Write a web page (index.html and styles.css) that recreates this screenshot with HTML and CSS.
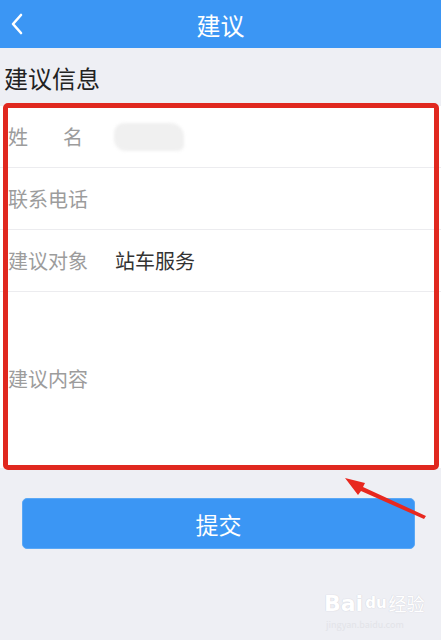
FILE: index.html
```html
<!DOCTYPE html>
<html>
<head>
    <title>建议</title>
    <meta charset="utf-8">
    <meta name="viewport" content="width=device-width, initial-scale=1">
    <link rel="stylesheet" href="styles.css">
</head>
<body>
    <div class="topbar">
        <svg class="back" width="14" height="22" viewBox="0 0 14 22">
            <path d="M11 2 L3 11 L11 20" fill="none" stroke="#fff" stroke-width="2.6" stroke-linecap="round" stroke-linejoin="round"/>
        </svg>
        <span class="topbar-title">建议</span>
    </div>

    <h2 class="section-title">建议信息</h2>

    <div class="form-card">
        <div class="form-row">
            <span class="label label-name"><span>姓</span><span>名</span></span>
            <span class="blurred"></span>
        </div>
        <div class="form-row">
            <span class="label">联系电话</span>
        </div>
        <div class="form-row">
            <span class="label">建议对象</span>
            <span class="value">站车服务</span>
        </div>
        <div class="form-row form-row-tall">
            <span class="label">建议内容</span>
        </div>
        <!-- 标注框 -->
        <div class="mark-box"></div>
    </div>

    <div class="submit-wrap">
        <button class="submit-btn">提交</button>
        <svg class="mark-arrow" width="90" height="50" viewBox="0 0 90 50">
            <polygon points="83,42 20,13 22,9 2,4 15,21 18,17 81,45" fill="#e8281f"/>
        </svg>
    </div>

    <div class="watermark">
        <div class="wm-logo"><span>Bai</span><span class="wm-du">du</span><span class="wm-cn">经验</span></div>
        <div class="wm-url">jingyan.baidu.com</div>
    </div>
</body>
</html>
```

FILE: styles.css
```css
body {
    margin: 0;
    background-color: #eeeff4;
    font-family: "Noto Sans CJK SC", "Noto Sans", sans-serif;
    width: 441px;
    height: 640px;
    overflow: hidden;
    position: relative;
}
.topbar {
    height: 48px;
    background-color: #3b96f4;
    display: flex;
    align-items: center;
    justify-content: center;
    position: relative;
}
.back {
    position: absolute;
    left: 10px;
    top: 13px;
}
.topbar-title {
    color: #fff;
    font-size: 24px;
}
.section-title {
    margin: 0;
    padding: 12px 0 0 4px;
    height: 46px;
    font-size: 24px;
    font-weight: normal;
    line-height: 36px;
    color: #222;
}
.form-card {
    background-color: #fff;
    position: relative;
    height: 362px;
}
.form-row {
    height: 61px;
    border-bottom: 1px solid #ececef;
    display: flex;
    align-items: center;
    padding-left: 8px;
    font-size: 20px;
}
.form-row-tall {
    height: 173px;
    border-bottom: none;
}
.label {
    width: 107px;
    color: #9c9c9c;
}
.label-name {
    display: flex;
}
.label-name span:first-child {
    width: 55px;
}
.value {
    color: #333;
}
.blurred {
    width: 70px;
    height: 28px;
    border-radius: 10px 14px 6px 12px;
    background-color: #f0f0f0;
    filter: blur(1.5px);
    margin-left: -1px;
}
.mark-box {
    position: absolute;
    left: 3px;
    top: -3px;
    right: 2px;
    bottom: -2px;
    border: 5px solid #e0281f;
    border-radius: 5px;
}
.submit-wrap {
    position: relative;
    padding: 30px 26px 0 22px;
}
.submit-btn {
    width: 100%;
    height: 51px;
    background-color: #3b96f4;
    border: 1px solid #5aa8f6;
    border-radius: 5px;
    color: #fff;
    font-family: inherit;
    font-size: 23px;
    padding: 0;
}
.mark-arrow {
    position: absolute;
    left: 343px;
    top: 6px;
}
.watermark {
    position: absolute;
    left: 324px;
    top: 590px;
    color: #fff;
    text-shadow: 0 0 1px #d4d5dc, 0 0 1px #d4d5dc;
}
.wm-logo {
    font-family: "DejaVu Sans", sans-serif;
    font-size: 22px;
    font-weight: bold;
    display: flex;
    align-items: center;
}
.wm-du {
    font-size: 15px;
    margin: 0 2px;
}
.wm-cn {
    font-family: "Noto Sans CJK SC", sans-serif;
    font-size: 18px;
    font-weight: normal;
}
.wm-url {
    font-size: 9px;
    color: #e2e3e8;
    text-shadow: none;
    margin-top: 2px;
    padding-left: 2px;
}
```
